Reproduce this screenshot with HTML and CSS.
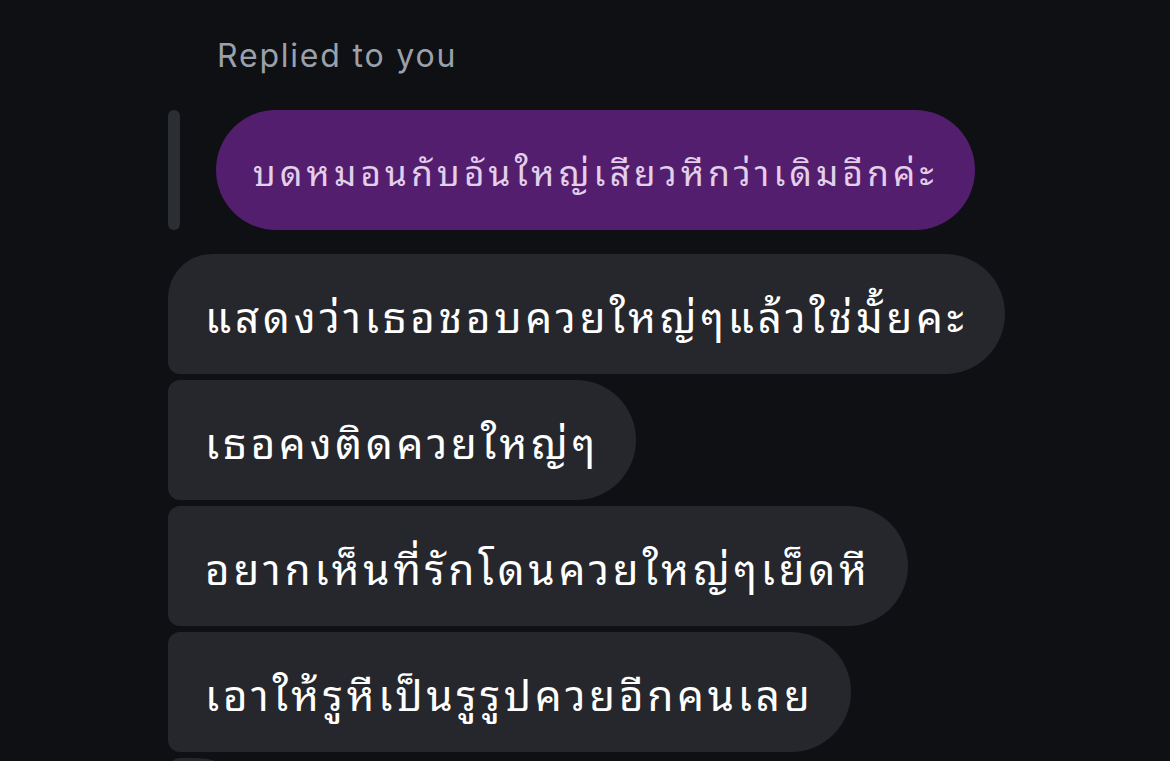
FILE: index.html
```html
<!DOCTYPE html>
<html lang="th">
<head>
<meta charset="utf-8">
<link rel="stylesheet" href="styles.css">
</head>
<body>
<div class="thread">
  <div class="replied">Replied to you</div>
  <div class="reply-row">
    <div class="reply-bar"></div>
    <div class="bubble-purple">บดหมอนกับอันใหญ่เสียวหีกว่าเดิมอีกค่ะ</div>
  </div>
  <div class="messages">
    <div class="bubble first">แสดงว่าเธอชอบควยใหญ่ๆแล้วใช่มั้ยคะ</div>
    <div class="bubble">เธอคงติดควยใหญ่ๆ</div>
    <div class="bubble">อยากเห็นที่รักโดนควยใหญ่ๆเย็ดหี</div>
    <div class="bubble">เอาให้รูหีเป็นรูรูปควยอีกคนเลย</div>
    <div class="bubble">&nbsp;</div>
  </div>
</div>
</body>
</html>
```
FILE: styles.css
```css
html, body {
  margin: 0;
  padding: 0;
  background: #0e1014;
  height: 100%;
  overflow: hidden;
}
.thread {
  padding-left: 168px;
  padding-top: 36px;
  display: flex;
  flex-direction: column;
  align-items: flex-start;
}
.replied {
  margin-left: 49px;
  font-family: Inter, "Noto Sans", sans-serif;
  font-size: 32px;
  letter-spacing: 1.8px;
  line-height: 40px;
  color: #9ba1ab;
  height: 40px;
}
.reply-row {
  margin-top: 34px;
  display: flex;
  gap: 36px;
  align-items: stretch;
}
.reply-bar {
  width: 12px;
  border-radius: 6px;
  background: #2b2e33;
}
.bubble-purple {
  height: 120px;
  display: flex;
  align-items: center;
  padding: 0 37px 0 37px;
  border-radius: 60px;
  background: #541e6f;
  color: #e2cfea;
  font-family: "Noto Sans Thai Looped", "Noto Sans Thai", "Noto Sans", sans-serif;
  font-size: 35px;
  letter-spacing: 4.27px;
  white-space: nowrap;
}
.messages {
  margin-top: 24px;
  display: flex;
  flex-direction: column;
  align-items: flex-start;
  gap: 6px;
}
.bubble {
  height: 120px;
  display: flex;
  align-items: center;
  padding: 0 37px;
  background: #25272c;
  color: #ffffff;
  border-radius: 12px 60px 60px 12px;
  font-family: "Noto Sans Thai Looped", "Noto Sans Thai", "Noto Sans", sans-serif;
  font-size: 42px;
  letter-spacing: 3.9px;
  white-space: nowrap;
}
.bubble.first {
  border-top-left-radius: 44px;
}
```
